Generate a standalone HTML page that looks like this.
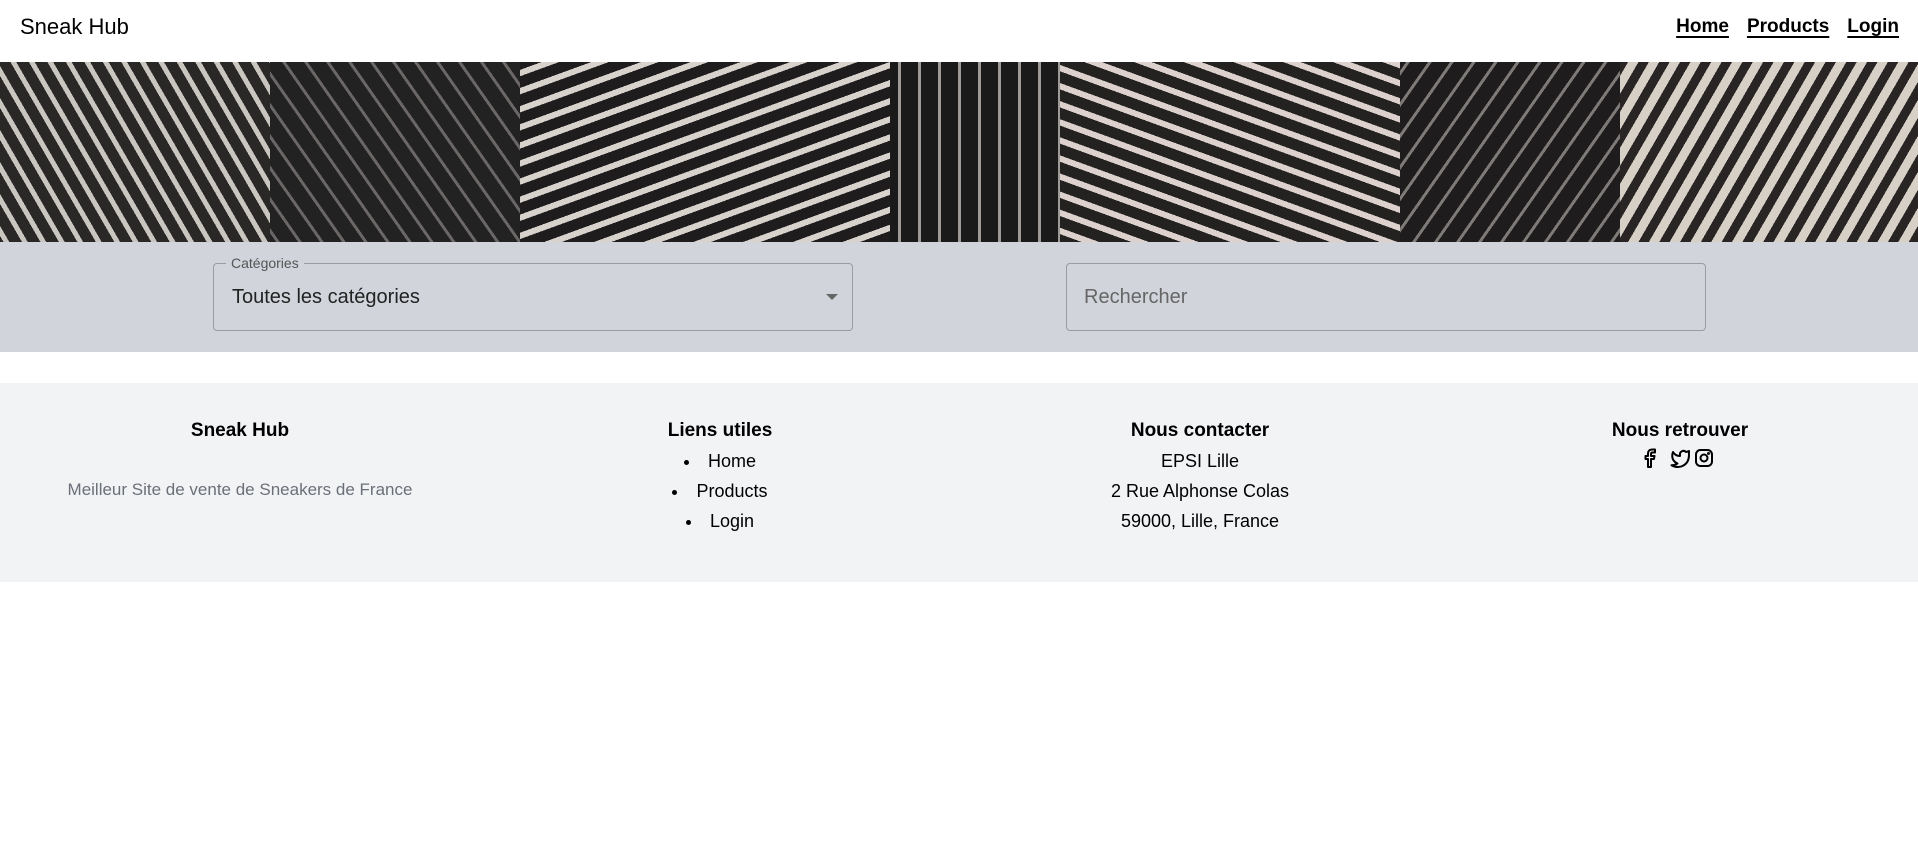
<!DOCTYPE html>
<html><head><meta charset="utf-8"><style>
*{margin:0;padding:0;box-sizing:border-box}
html,body{width:1918px;height:861px;background:#fff;overflow:hidden;font-family:"Liberation Sans",sans-serif;color:#000}
.nav{position:absolute;top:0;left:0;width:1918px;height:62px;background:#fff}
.logo{position:absolute;left:20px;top:14px;font-size:22px}
.links{position:absolute;right:19px;top:16px;font-size:19px;font-weight:bold}
.links a{color:#000;text-decoration:underline;text-decoration-thickness:2px;text-underline-offset:4px;margin-left:18px}
.hero{position:absolute;top:62px;left:0;width:1918px;height:180px;overflow:hidden;background:#2a2626}
.hero div{position:absolute;top:-40px;height:260px}
.band{position:absolute;top:242px;left:0;width:1918px;height:110px;background:#d1d4db}
.box{position:absolute;top:21px;height:68px;border:1px solid #9a9ca2;border-radius:4px}
.lab{position:absolute;left:12px;top:-9px;background:#d1d4db;padding:0 5px;font-size:14px;color:#555}
.foot{position:absolute;top:383px;left:0;width:1918px;height:199px;background:#f2f3f5}
.col{position:absolute;top:33px;width:480px;text-align:center;font-size:18px;line-height:30px}
.col h4{font-size:19px;font-weight:bold;line-height:30px}
.col ul{list-style:disc inside}
</style></head><body>
<div class="nav"><div class="logo">Sneak Hub</div>
<div class="links"><a>Home</a><a>Products</a><a>Login</a></div></div>
<div class="hero">
<div style="left:-60px;width:340px;background:repeating-linear-gradient(60deg,#2a2727 0 11px,#c9c6bf 11px 16px)"></div>
<div style="left:270px;width:250px;background:repeating-linear-gradient(55deg,#222 0 10px,#6a6766 10px 13px,#222 13px 18px)"></div>
<div style="left:520px;width:370px;background:repeating-linear-gradient(160deg,#1e1c1c 0 11px,#d8d2cd 11px 17px)"></div>
<div style="left:890px;width:170px;background:repeating-linear-gradient(90deg,#1a1a1a 0 8px,#9d9a98 8px 11px,#1a1a1a 11px 20px)"></div>
<div style="left:1060px;width:340px;background:repeating-linear-gradient(20deg,#242121 0 11px,#dcd1cc 11px 17px)"></div>
<div style="left:1400px;width:220px;background:repeating-linear-gradient(125deg,#1e1c1c 0 10px,#7d7a78 10px 13px,#1e1c1c 13px 18px)"></div>
<div style="left:1620px;width:320px;background:repeating-linear-gradient(120deg,#2a2525 0 9px,#d6d0c6 9px 18px)"></div>
</div>
<div class="band">
<div class="box" style="left:213px;width:640px"><span class="lab">Catégories</span>
<span style="position:absolute;left:18px;top:22px;font-size:20px;color:#222">Toutes les catégories</span>
<span style="position:absolute;right:14px;top:30px;width:0;height:0;border-left:6px solid transparent;border-right:6px solid transparent;border-top:6px solid #666"></span></div>
<div class="box" style="left:1066px;width:640px"><span style="position:absolute;left:17px;top:22px;font-size:20px;color:#666">Rechercher</span></div>
</div>
<div class="foot">
<div class="col" style="left:0"><h4>Sneak Hub</h4><p style="margin-top:29px;color:#6b6f78;font-size:17px">Meilleur Site de vente de Sneakers de France</p></div>
<div class="col" style="left:480px"><h4>Liens utiles</h4><ul><li>Home</li><li>Products</li><li>Login</li></ul></div>
<div class="col" style="left:960px"><h4>Nous contacter</h4><p>EPSI Lille</p><p>2 Rue Alphonse Colas</p><p>59000, Lille, France</p></div>
<div class="col" style="left:1440px"><h4>Nous retrouver</h4>
<svg width="84" height="24" viewBox="0 0 84 24" style="margin-top:0" fill="none" stroke="#000" stroke-width="2" stroke-linecap="round" stroke-linejoin="round">
<path d="M13 21v-8h3l.5-3H13V8c0-1 .5-1.5 1.5-1.5H17V3.5h-3c-2.5 0-4 1.5-4 4V10H7.5v3H10v8z"/>
<path d="M51 5c-1 .5-2 .8-3 1a3.5 3.5 0 0 0-6 3v1c-3 0-5.5-1.5-7-4 0 0-3.5 8 4.5 11.5-2 1.2-4 1.8-6 1.7 8 4.5 17.5 0 17.5-10.2 0-.3 0-.6-.1-.8C51 7 51 6 51 5z"/>
<rect x="58" y="4" width="16" height="16" rx="4.5"/><circle cx="66" cy="12" r="3.5"/><circle cx="70.5" cy="7.5" r=".5" fill="#000"/>
</svg></div>
</div>
</body></html>
